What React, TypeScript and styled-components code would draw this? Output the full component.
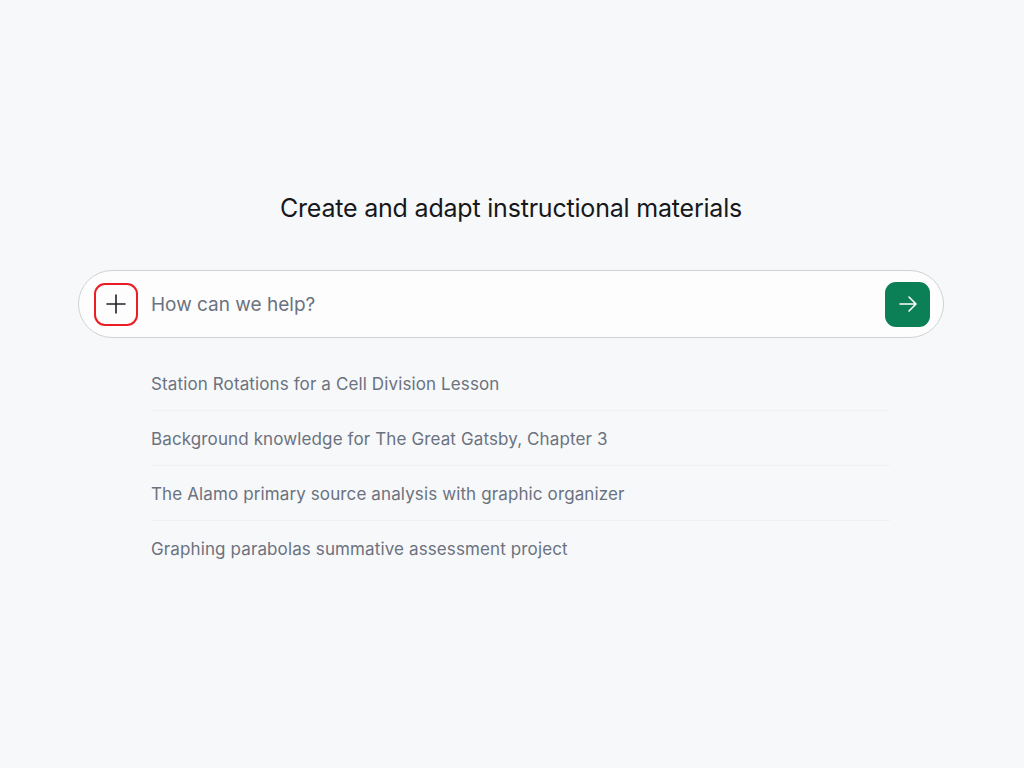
import React from "react";
import styled, { createGlobalStyle } from "styled-components";

const Global = createGlobalStyle`
  html, body { margin: 0; padding: 0; background: #f7f8f9; }
  body { font-family: Inter, "Noto Sans", sans-serif; -webkit-font-smoothing: antialiased; }
`;

const Page = styled.main`
  min-height: 768px;
  display: flex;
  flex-direction: column;
  align-items: center;
  padding: 190px 80px 0 78px;
  box-sizing: border-box;
`;

const Title = styled.h1`
  margin: 0;
  font-size: 25px;
  font-weight: 400;
  color: #16181b;
  letter-spacing: -0.2px;
  line-height: 36px;
`;

const Composer = styled.form`
  margin-top: 44px;
  width: 100%;
  height: 68px;
  box-sizing: border-box;
  border: 1px solid #cfd2d6;
  border-radius: 34px;
  background: #fdfdfd;
  display: flex;
  align-items: center;
  padding: 0 13px 0 15px;
  gap: 13px;
`;

const IconButton = styled.button`
  width: 44px;
  height: 43px;
  box-sizing: border-box;
  border: 2.5px solid #ec1c24;
  border-radius: 11px;
  background: transparent;
  display: flex;
  align-items: center;
  justify-content: center;
  padding: 0;
  color: #1f2226;
`;

const Input = styled.input`
  flex: 1;
  border: none;
  background: transparent;
  outline: none;
  font-family: inherit;
  font-size: 19px;
  color: #1f2226;
  padding: 0;
  &::placeholder { color: #6b7280; }
`;

const SendButton = styled.button`
  width: 45px;
  height: 45px;
  border: none;
  border-radius: 11px;
  background: #0b7f56;
  color: #fff;
  display: flex;
  align-items: center;
  justify-content: center;
  padding: 0;
`;

const List = styled.ul`
  list-style: none;
  margin: 18px 0 0 0;
  padding: 0 54px 0 73px;
  width: 100%;
  box-sizing: border-box;
`;

const Item = styled.li<{ $last?: boolean }>`
  height: 55px;
  display: flex;
  align-items: center;
  font-size: 17px;
  letter-spacing: 0.12px;
  color: #6b7280;
  border-bottom: 1px solid ${(p) => (p.$last ? "transparent" : "#f0f1f3")};
  box-sizing: border-box;
  padding-top: 1px;
`;

const suggestions = [
  "Station Rotations for a Cell Division Lesson",
  "Background knowledge for The Great Gatsby, Chapter 3",
  "The Alamo primary source analysis with graphic organizer",
  "Graphing parabolas summative assessment project",
];

export default function App() {
  return (
    <>
      <Global />
      <Page>
        <Title>Create and adapt instructional materials</Title>
        <Composer onSubmit={(e) => e.preventDefault()}>
          <IconButton type="button" aria-label="Add">
            <svg width="22" height="22" viewBox="0 0 22 22" fill="none" stroke="currentColor" strokeWidth="1.6" strokeLinecap="round">
              <path d="M11 2v18M2 11h18" />
            </svg>
          </IconButton>
          <Input placeholder="How can we help?" />
          <SendButton type="submit" aria-label="Send">
            <svg width="22" height="22" viewBox="0 0 22 22" fill="none" stroke="currentColor" strokeWidth="1.6" strokeLinecap="round" strokeLinejoin="round">
              <path d="M3 11h16M12 4l7 7-7 7" />
            </svg>
          </SendButton>
        </Composer>
        <List>
          {suggestions.map((s, i) => (
            <Item key={s} $last={i === suggestions.length - 1}>{s}</Item>
          ))}
        </List>
      </Page>
    </>
  );
}
